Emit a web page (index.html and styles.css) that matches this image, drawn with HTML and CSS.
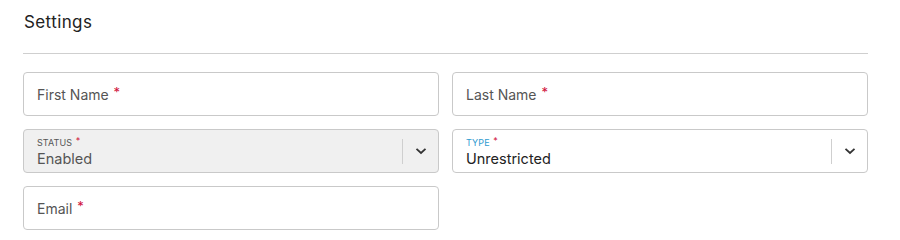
FILE: index.html
```html
<!DOCTYPE html>
<html>
<head>
<meta charset="utf-8">
<link rel="stylesheet" href="styles.css">
</head>
<body>
<div class="page">
  <h2 class="title">Settings</h2>
  <div class="divider"></div>
  <div class="grid">
    <div class="field"><span class="placeholder">First Name <span class="req">*</span></span></div>
    <div class="field"><span class="placeholder">Last Name <span class="req">*</span></span></div>
    <div class="field select disabled">
      <div class="value-wrap">
        <span class="label">STATUS <span class="req">*</span></span>
        <span class="value muted">Enabled</span>
      </div>
      <span class="sep"></span>
      <span class="chev"><svg width="12" height="8" viewBox="0 0 12 8"><path d="M1.5 1.8 L6 6 L10.5 1.8" fill="none" stroke="#333" stroke-width="1.8"/></svg></span>
    </div>
    <div class="field select">
      <div class="value-wrap">
        <span class="label blue">TYPE <span class="req">*</span></span>
        <span class="value">Unrestricted</span>
      </div>
      <span class="sep"></span>
      <span class="chev"><svg width="12" height="8" viewBox="0 0 12 8"><path d="M1.5 1.8 L6 6 L10.5 1.8" fill="none" stroke="#333" stroke-width="1.8"/></svg></span>
    </div>
    <div class="field"><span class="placeholder">Email <span class="req">*</span></span></div>
  </div>
</div>
</body>
</html>
```

FILE: styles.css
```css
* { box-sizing: border-box; }
body {
  margin: 0;
  background: #fff;
  font-family: Inter, "Liberation Sans", Arial, sans-serif;
  color: #333;
}
.page {
  padding: 10px 32px 0 23px;
  width: 900px;
}
.title {
  margin: 0 0 0 1px;
  font-size: 17px;
  font-weight: 400;
  color: #222;
  line-height: 24px;
  letter-spacing: 0.4px;
}
.divider {
  margin-top: 19px;
  height: 1px;
  background: #cfcfcf;
  width: 845px;
}
.grid {
  margin-top: 18px;
  display: grid;
  grid-template-columns: 416px 416px;
  column-gap: 13px;
  row-gap: 13px;
}
.field {
  height: 44px;
  border: 1px solid #c9c9c9;
  border-radius: 4px;
  background: #fff;
  display: flex;
  align-items: center;
  padding-left: 13px;
}
.placeholder {
  font-size: 14px;
  color: #555;
  padding-top: 1px;
}
.req {
  color: #d0103a;
  font-size: 13px;
  position: relative;
  top: -3px;
  margin-left: 1px;
}
.select { padding-right: 0; }
.disabled { background: #f0f0f0; }
.value-wrap {
  flex: 1;
  display: flex;
  flex-direction: column;
  padding-top: 3px;
}
.label {
  font-size: 9px;
  color: #555;
  letter-spacing: 0.1px;
  line-height: 12px;
}
.label .req { font-size: 9px; top: -2px; }
.label.blue { color: #2f9bd0; }
.value {
  font-size: 14.5px;
  color: #222;
  line-height: 19px;
}
.value.muted { color: #555; }
.sep {
  width: 1px;
  height: 25px;
  background: #cfcfcf;
}
.chev {
  width: 35px;
  display: flex;
  justify-content: center;
  align-items: center;
}
```
